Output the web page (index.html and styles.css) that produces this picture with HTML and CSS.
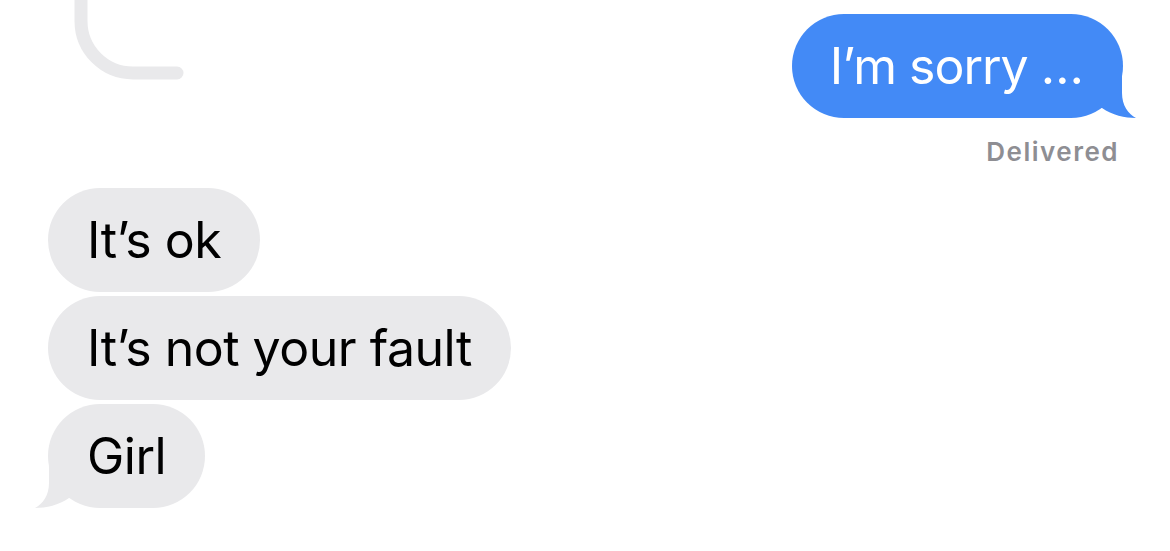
FILE: index.html
```html
<!DOCTYPE html>
<html lang="en">
<head>
<meta charset="utf-8">
<title>Messages</title>
<link rel="stylesheet" href="styles.css">
</head>
<body>
<main class="thread">
  <div class="top-row">
    <svg class="prev-curve" width="140" height="82" viewBox="0 0 140 82" aria-hidden="true">
      <path d="M33 -10 V21 A52 52 0 0 0 85 73 H129" fill="none" stroke="#e9e9eb" stroke-width="13" stroke-linecap="round"/>
    </svg>
    <div class="outgoing">
      <div class="bubble sent">I’m sorry …
        <svg class="tail tail-sent" width="40" height="50" viewBox="0 0 40 50" aria-hidden="true">
          <path d="M4 40 L0 40 L0 0 L24 0 L24 25 C24 37 30 46 38 50 C27 50 14 47 4 40 Z" fill="#438af6"/>
        </svg>
      </div>
      <div class="status">Delivered</div>
    </div>
  </div>
  <div class="incoming">
    <div class="bubble received">It’s ok</div>
    <div class="bubble received">It’s not your fault</div>
    <div class="bubble received last">Girl
      <svg class="tail tail-received" width="40" height="50" viewBox="0 0 40 50" aria-hidden="true">
        <path d="M4 40 L0 40 L0 0 L24 0 L24 25 C24 37 30 46 38 50 C27 50 14 47 4 40 Z" fill="#e9e9eb"/>
      </svg>
    </div>
  </div>
</main>
</body>
</html>
```
FILE: styles.css
```css
html, body {
  margin: 0;
  padding: 0;
  background: #ffffff;
}

body {
  font-family: "Inter", "Liberation Sans", sans-serif;
  width: 1170px;
  height: 551px;
  overflow: hidden;
}

.thread {
  display: flex;
  flex-direction: column;
  padding: 0 47px 0 48px;
}

.top-row {
  display: flex;
  justify-content: space-between;
  align-items: flex-start;
}

.prev-curve {
  display: block;
}

.outgoing {
  display: flex;
  flex-direction: column;
  align-items: flex-end;
  padding-top: 14px;
}

.bubble {
  position: relative;
  font-size: 50px;
  line-height: 60px;
  letter-spacing: -0.5px;
  padding: 22px 39px;
  border-radius: 52px;
  white-space: nowrap;
}

.sent {
  background: #438af6;
  color: #ffffff;
  letter-spacing: -1px;
  padding-right: 40px;
  padding-left: 38px;
}

.received {
  background: #e9e9eb;
  color: #000000;
  align-self: flex-start;
}

.tail {
  position: absolute;
  bottom: 0;
  display: block;
}

.tail-sent {
  right: -15px;
}

.tail-received {
  left: -15px;
  transform: scaleX(-1);
}

.status {
  margin-top: 19px;
  margin-right: 4px;
  font-size: 26px;
  line-height: 30px;
  font-weight: 600;
  letter-spacing: 1.5px;
  color: #8e8e93;
}

.incoming {
  display: flex;
  flex-direction: column;
  gap: 4px;
  margin-top: 21px;
}
```
